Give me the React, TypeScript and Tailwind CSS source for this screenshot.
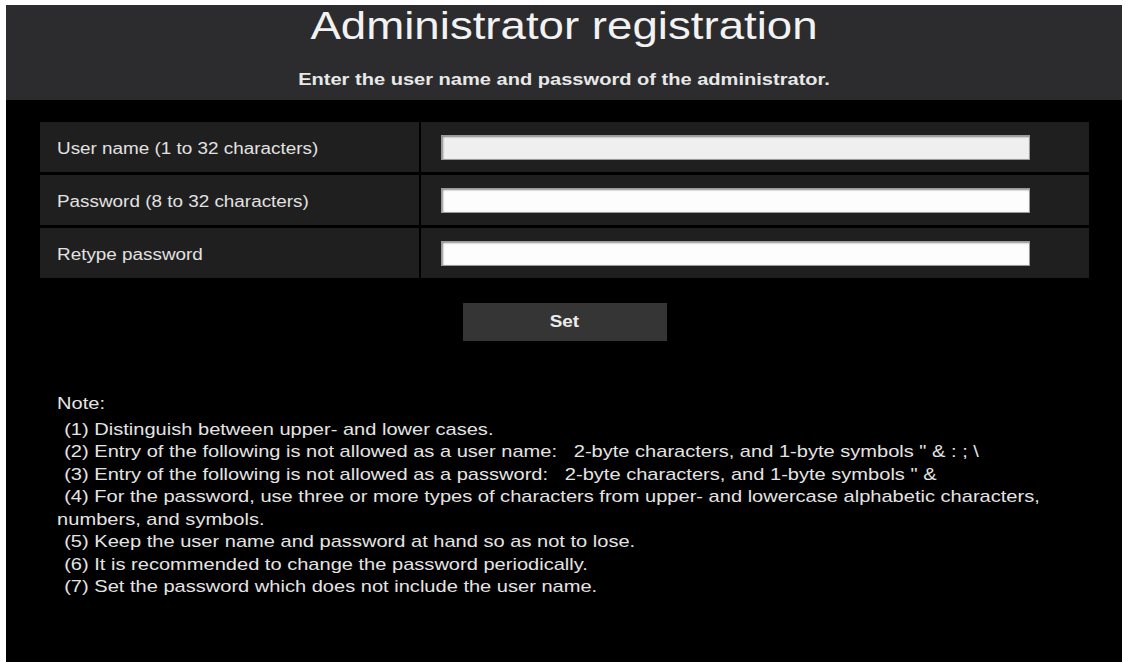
import React from "react";

const notes: { text: string; indent: boolean }[] = [
  { text: "(1) Distinguish between upper- and lower cases.", indent: true },
  {
    text: "(2) Entry of the following is not allowed as a user name:\u00a0\u00a0\u00a02-byte characters, and 1-byte symbols \" & : ; \\",
    indent: true,
  },
  {
    text: "(3) Entry of the following is not allowed as a password:\u00a0\u00a0\u00a02-byte characters, and 1-byte symbols \" &",
    indent: true,
  },
  {
    text: "(4) For the password, use three or more types of characters from upper- and lowercase alphabetic characters,",
    indent: true,
  },
  { text: "numbers, and symbols.", indent: false },
  { text: "(5) Keep the user name and password at hand so as not to lose.", indent: true },
  { text: "(6) It is recommended to change the password periodically.", indent: true },
  { text: "(7) Set the password which does not include the user name.", indent: true },
];

const rows = [
  { label: "User name (1 to 32 characters)", bg: "bg-[#efefef]", type: "text" },
  { label: "Password (8 to 32 characters)", bg: "bg-[#fdfdfd]", type: "password" },
  { label: "Retype password", bg: "bg-[#fdfdfd]", type: "password" },
];

export default function App() {
  return (
    <div className="w-[1126px] h-[662px] bg-white pl-[6px] pt-[5px] pr-[4px] overflow-hidden font-['Liberation_Sans',Arial,sans-serif]">
      <div className="h-full bg-black flex flex-col">
        {/* Header */}
        <div className="h-[95px] shrink-0 bg-[#2c2c2e] flex flex-col pt-[1px]">
          <h1 className="text-[39px] leading-[40px] font-normal text-[#f2f2f2] text-center scale-x-[1.17] origin-center whitespace-nowrap">
            Administrator registration
          </h1>
          <p className="mt-[24px] text-[17px] leading-[20px] font-bold text-[#e8e8e8] text-center scale-x-[1.18] origin-center whitespace-nowrap">
            Enter the user name and password of the administrator.
          </p>
        </div>

        {/* Body */}
        <div className="pl-[34px] pt-[22px]">
          <div className="w-[1049px] flex flex-col gap-[3px]">
            {rows.map((r) => (
              <div key={r.label} className="flex h-[50px] gap-[2px]">
                <div className="w-[379px] shrink-0 bg-[#1f1f1f] pl-[17px] pt-[3px] flex items-center">
                  <span className="text-[16px] text-[#e2e2e2] scale-x-[1.18] origin-left whitespace-nowrap">
                    {r.label}
                  </span>
                </div>
                <div className="flex-1 bg-[#1f1f1f] pl-[20px] pt-[1px] flex items-center">
                  <input
                    type={r.type}
                    className={`w-[589px] h-[25px] ${r.bg} border border-[#9a9a9a] shadow-[inset_1px_1px_2px_rgba(0,0,0,0.45)] outline-none`}
                  />
                </div>
              </div>
            ))}
          </div>

          <div className="w-[1049px] flex justify-center mt-[25px]">
            <button className="w-[204px] h-[38px] bg-[#353535] flex items-center justify-center">
              <span className="text-[16px] font-bold text-[#ececec] scale-x-[1.18] origin-center">Set</span>
            </button>
          </div>

          <div className="mt-[52px] pl-[14.5px] text-[17px] leading-[22.5px] text-[#e4e4e4] scale-x-[1.18] origin-left whitespace-nowrap">
            <p>Note:</p>
            <div className="mt-[3px]">
              {notes.map((n) => (
                <p key={n.text} className={n.indent ? "pl-[6px]" : ""}>
                  {n.text}
                </p>
              ))}
            </div>
          </div>
        </div>
      </div>
    </div>
  );
}
